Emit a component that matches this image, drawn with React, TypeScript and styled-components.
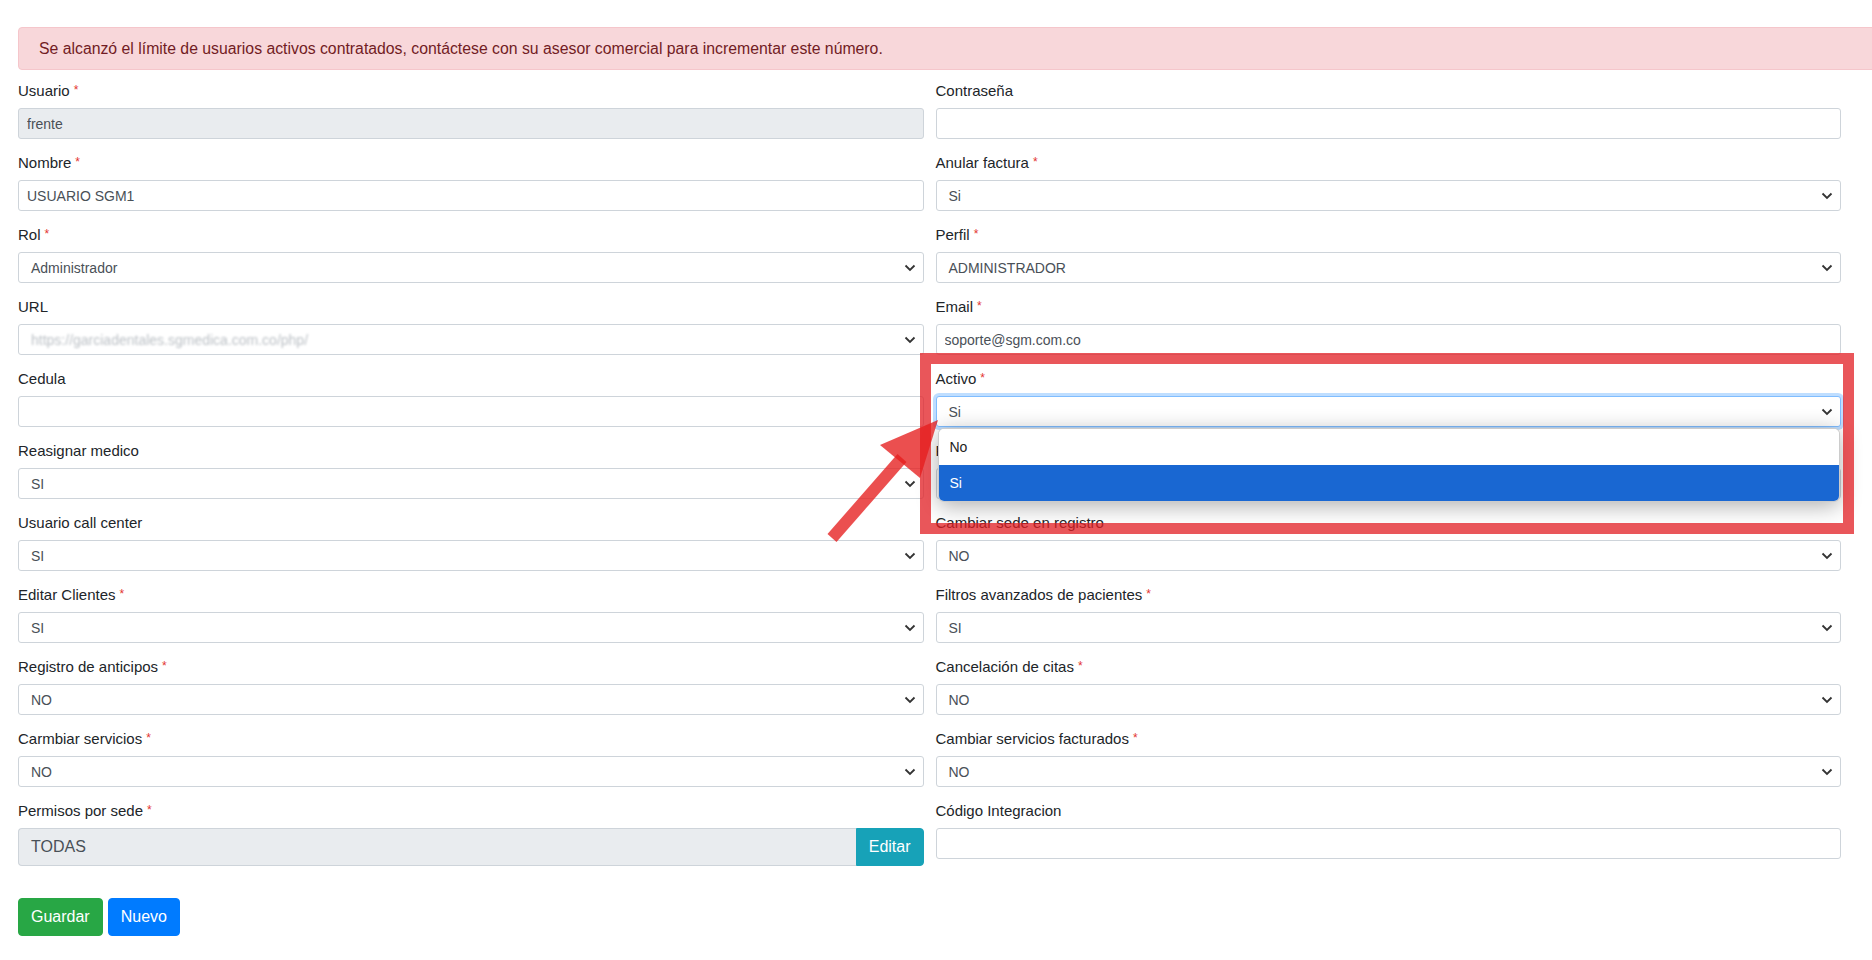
import styled, { createGlobalStyle, css } from "styled-components";

const GlobalStyle = createGlobalStyle`
  body {
    margin: 0;
    background: #fff;
    overflow-x: hidden;
    font-family: "Liberation Sans", Arial, sans-serif;
    color: #212529;
  }
  * { box-sizing: border-box; }
`;

const Page = styled.div`
  padding: 27px 31px 40px 18px;
`;

const Alert = styled.div`
  margin-right: -40px;
  margin-bottom: 10px;
  padding: 9px 20px;
  background: #f8d7da;
  border: 1px solid #f5c6cb;
  border-radius: 4px;
  color: #721c24;
  font-size: 15.8px;
  line-height: 23px;
`;

const FormGrid = styled.div`
  display: grid;
  grid-template-columns: 1fr 1fr;
  column-gap: 12px;
  row-gap: 13px;
  align-items: start;
`;

const Field = styled.div`
  position: relative;
  display: flex;
  flex-direction: column;
`;

const Label = styled.label`
  height: 22px;
  font-size: 15px;
  line-height: 22px;
  margin-bottom: 6px;
  color: #212529;
  white-space: nowrap;
`;

const Req = styled.span`
  position: relative;
  top: -2px;
  margin-left: 4px;
  color: #e3342f;
  font-size: 12px;
`;

const TextInput = styled.input<{ $disabled?: boolean }>`
  width: 100%;
  height: 31px;
  padding: 0 8px;
  border: 1px solid #ced4da;
  border-radius: 3px;
  font-family: inherit;
  font-size: 14px;
  color: #495057;
  background: ${(p) => (p.$disabled ? "#e9ecef" : "#fff")};
  outline: none;
`;

const SelectBox = styled.div<{ $focused?: boolean }>`
  display: flex;
  align-items: center;
  justify-content: space-between;
  height: 31px;
  padding: 0 7px 0 12px;
  border: 1px solid #ced4da;
  border-radius: 3px;
  background: #fff;
  font-size: 14px;
  color: #495057;
  ${(p) =>
    p.$focused &&
    css`
      border-color: #80bdff;
      box-shadow: 0 0 0 3px rgba(0, 123, 255, 0.25);
    `}
`;

const SelectValue = styled.span<{ $blurred?: boolean }>`
  white-space: nowrap;
  ${(p) =>
    p.$blurred &&
    css`
      color: #bcc1c6;
      filter: blur(1.1px);
    `}
`;

const InputGroup = styled.div`
  display: flex;
  height: 38px;
`;

const GroupText = styled.div`
  flex: 1;
  display: flex;
  align-items: center;
  padding: 0 12px;
  background: #e9ecef;
  border: 1px solid #ced4da;
  border-right: none;
  border-radius: 4px 0 0 4px;
  font-size: 16px;
  color: #495057;
`;

const GroupButton = styled.button`
  padding: 0 12px;
  border: 1px solid #17a2b8;
  border-radius: 0 4px 4px 0;
  background: #17a2b8;
  color: #fff;
  font-family: inherit;
  font-size: 16px;
`;

const Actions = styled.div`
  display: flex;
  gap: 5px;
  margin-top: 32px;
`;

const Button = styled.button<{ $variant: "success" | "primary" }>`
  height: 38px;
  padding: 0 12px;
  border: 1px solid ${(p) => (p.$variant === "success" ? "#28a745" : "#007bff")};
  border-radius: 4px;
  background: ${(p) => (p.$variant === "success" ? "#28a745" : "#007bff")};
  color: #fff;
  font-family: inherit;
  font-size: 16px;
`;

const OptionList = styled.div`
  position: absolute;
  z-index: 6;
  top: 60px;
  left: 2px;
  right: 1px;
  background: #fff;
  border: 1px solid rgba(0, 0, 0, 0.2);
  border-radius: 6px;
  box-shadow: 0 4px 22px rgba(0, 0, 0, 0.32);
  overflow: hidden;
`;

const Option = styled.div<{ $selected?: boolean }>`
  height: 36px;
  display: flex;
  align-items: center;
  padding-left: 11px;
  font-size: 14px;
  color: ${(p) => (p.$selected ? "#fff" : "#222")};
  background: ${(p) => (p.$selected ? "#1967d2" : "#fff")};
`;

const RedFrame = styled.div`
  position: absolute;
  z-index: 7;
  top: -15px;
  left: -16px;
  right: -13px;
  height: 181px;
  border: 11px solid rgba(225, 30, 35, 0.75);
  pointer-events: none;
`;

const PointerArrow = styled.svg`
  position: absolute;
  z-index: 8;
  top: 42px;
  left: -116px;
  width: 130px;
  height: 140px;
  pointer-events: none;
`;

function Chevron() {
  return (
    <svg width="12" height="8" viewBox="0 0 12 8">
      <path d="M1.5 1.5l4.5 4.5 4.5-4.5" fill="none" stroke="#333" strokeWidth="1.8" />
    </svg>
  );
}

type FieldDef = {
  label: string;
  req?: boolean;
  kind: "input" | "select";
  value?: string;
  disabled?: boolean;
  blurred?: boolean;
};

const rows: [FieldDef, FieldDef][] = [
  [
    { label: "Usuario", req: true, kind: "input", value: "frente", disabled: true },
    { label: "Contraseña", kind: "input", value: "" },
  ],
  [
    { label: "Nombre", req: true, kind: "input", value: "USUARIO SGM1" },
    { label: "Anular factura", req: true, kind: "select", value: "Si" },
  ],
  [
    { label: "Rol", req: true, kind: "select", value: "Administrador" },
    { label: "Perfil", req: true, kind: "select", value: "ADMINISTRADOR" },
  ],
  [
    { label: "URL", kind: "select", value: "https://garciadentales.sgmedica.com.co/php/", blurred: true },
    { label: "Email", req: true, kind: "input", value: "soporte@sgm.com.co" },
  ],
  [
    { label: "Cedula", kind: "input", value: "" },
    { label: "Activo", req: true, kind: "select", value: "Si" },
  ],
  [
    { label: "Reasignar medico", kind: "select", value: "SI" },
    { label: "Permitir descuentos", req: true, kind: "select", value: "NO" },
  ],
  [
    { label: "Usuario call center", kind: "select", value: "SI" },
    { label: "Cambiar sede en registro", kind: "select", value: "NO" },
  ],
  [
    { label: "Editar Clientes", req: true, kind: "select", value: "SI" },
    { label: "Filtros avanzados de pacientes", req: true, kind: "select", value: "SI" },
  ],
  [
    { label: "Registro de anticipos", req: true, kind: "select", value: "NO" },
    { label: "Cancelación de citas", req: true, kind: "select", value: "NO" },
  ],
  [
    { label: "Carmbiar servicios", req: true, kind: "select", value: "NO" },
    { label: "Cambiar servicios facturados", req: true, kind: "select", value: "NO" },
  ],
];

function FieldLabel({ text, req }: { text: string; req?: boolean }) {
  return (
    <Label>
      {text}
      {req && <Req>*</Req>}
    </Label>
  );
}

function FormField({ def }: { def: FieldDef }) {
  const isActivo = def.label === "Activo";
  return (
    <Field>
      <FieldLabel text={def.label} req={def.req} />
      {def.kind === "input" ? (
        <TextInput readOnly value={def.value} $disabled={def.disabled} />
      ) : (
        <SelectBox $focused={isActivo}>
          <SelectValue $blurred={def.blurred}>{def.value}</SelectValue>
          <Chevron />
        </SelectBox>
      )}
      {isActivo && (
        <>
          <OptionList>
            <Option>No</Option>
            <Option $selected>Si</Option>
          </OptionList>
          <RedFrame />
          <PointerArrow viewBox="0 0 130 140">
            <line x1="12" y1="128" x2="82" y2="48" stroke="rgba(230,30,30,0.78)" strokeWidth="12" />
            <polygon points="118,10 60,35 100,68" fill="rgba(230,30,30,0.78)" />
          </PointerArrow>
        </>
      )}
    </Field>
  );
}

export default function App() {
  return (
    <Page>
      <GlobalStyle />
      <Alert>
        Se alcanzó el límite de usuarios activos contratados, contáctese con su asesor comercial para
        incrementar este número.
      </Alert>
      <FormGrid>
        {rows.map(([left, right]) => (
          <>
            <FormField key={left.label} def={left} />
            <FormField key={right.label} def={right} />
          </>
        ))}
        <Field>
          <FieldLabel text="Permisos por sede" req />
          <InputGroup>
            <GroupText>TODAS</GroupText>
            <GroupButton>Editar</GroupButton>
          </InputGroup>
        </Field>
        <Field>
          <FieldLabel text="Código Integracion" />
          <TextInput readOnly value="" />
        </Field>
      </FormGrid>
      <Actions>
        <Button $variant="success">Guardar</Button>
        <Button $variant="primary">Nuevo</Button>
      </Actions>
    </Page>
  );
}
